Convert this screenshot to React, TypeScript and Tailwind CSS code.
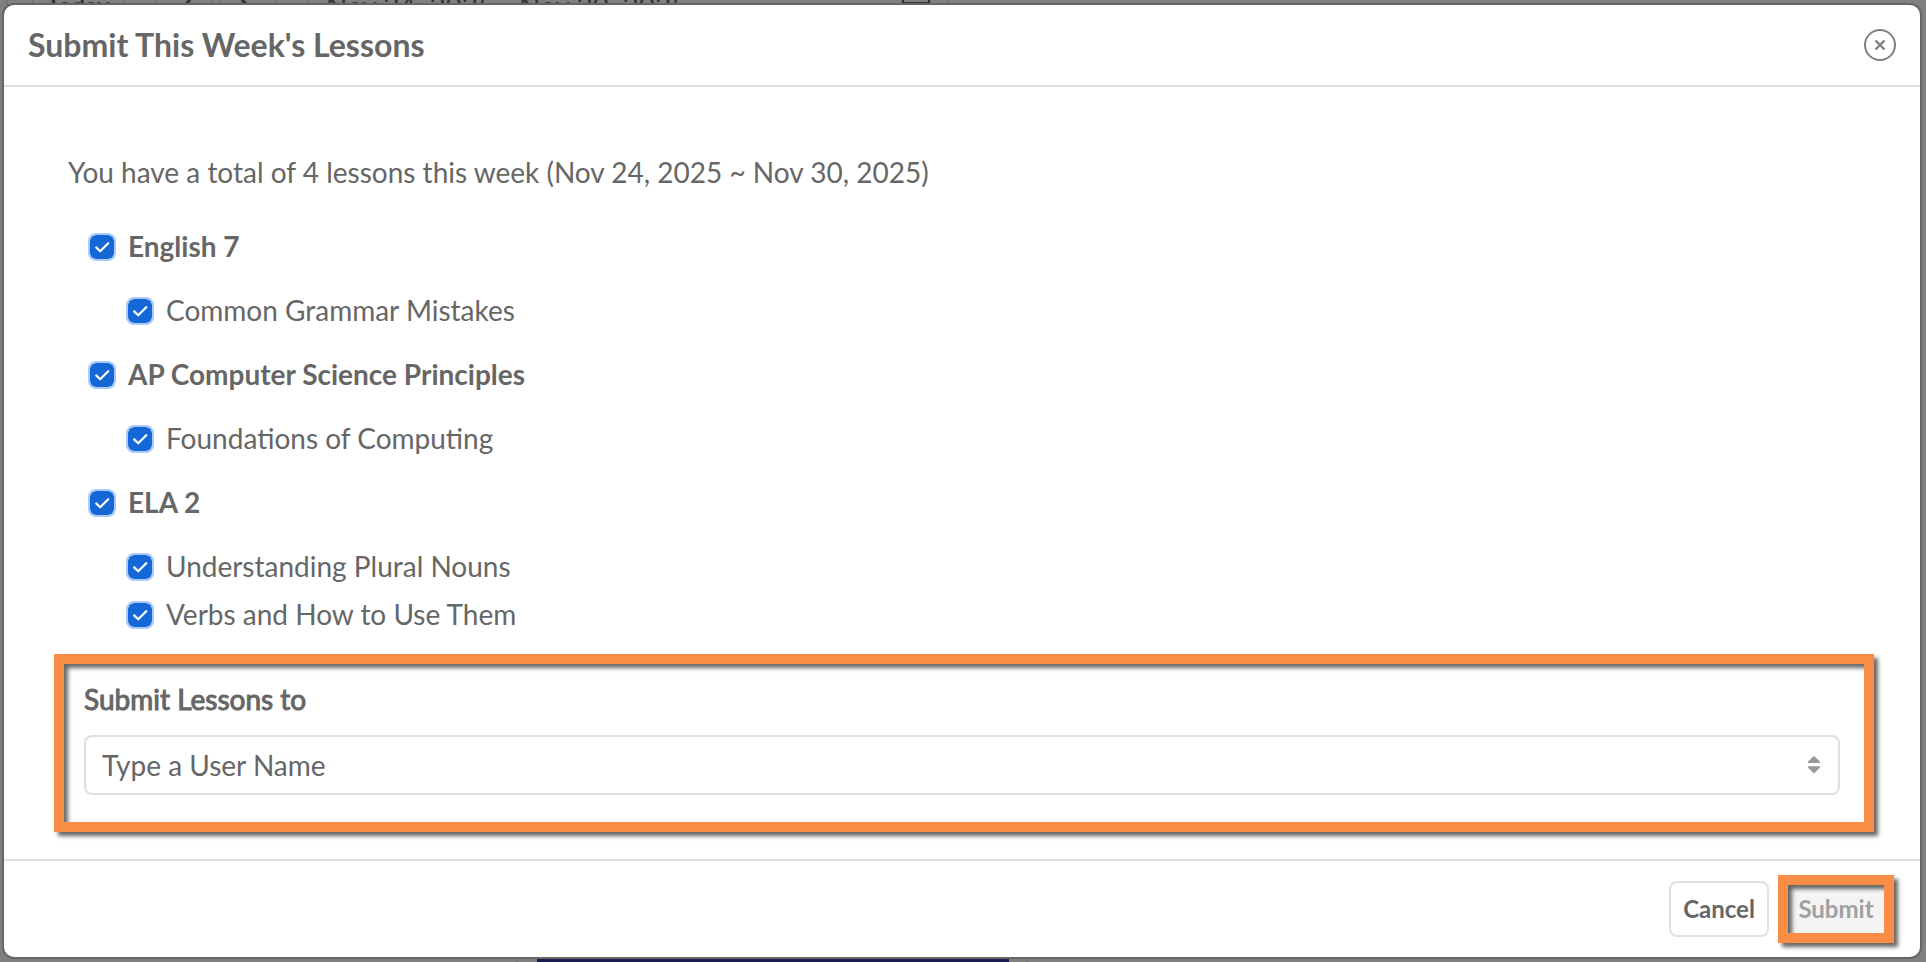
import { useState } from "react";
import { clsx } from "clsx";

type Lesson = { id: string; title: string };
type Course = { id: string; title: string; lessons: Lesson[] };

const courses: Course[] = [
  { id: "eng7", title: "English 7", lessons: [{ id: "grammar", title: "Common Grammar Mistakes" }] },
  { id: "apcsp", title: "AP Computer Science Principles", lessons: [{ id: "foundations", title: "Foundations of Computing" }] },
  {
    id: "ela2",
    title: "ELA 2",
    lessons: [
      { id: "plural", title: "Understanding Plural Nouns" },
      { id: "verbs", title: "Verbs and How to Use Them" },
    ],
  },
];

type CheckRowProps = { id: string; title: string; bold?: boolean; checked: boolean; onChange: () => void };

const CheckRow = ({ id, title, bold, checked, onChange }: CheckRowProps) => (
  <div className="flex h-12 items-center gap-3">
    <span className="grid size-7 shrink-0 place-items-center">
      <input
        id={id}
        type="checkbox"
        checked={checked}
        onChange={onChange}
        className="peer col-start-1 row-start-1 size-7 appearance-none rounded-lg border-2 border-[#a9cbf8] bg-white checked:bg-[#1566d6] checked:bg-clip-padding"
      />
      <svg viewBox="0 0 28 28" className="pointer-events-none invisible col-start-1 row-start-1 size-7 peer-checked:visible" fill="none" stroke="white" strokeWidth="2.2" strokeLinecap="round" strokeLinejoin="round">
        <path d="M8.2 14.4 L12.2 18.3 L20.2 10.2" />
      </svg>
    </span>
    <label htmlFor={id} className={clsx("pb-0.5 text-[28px] leading-9", bold && "font-bold")}>
      {title}
    </label>
  </div>
);

// calendar page that sits dimmed under the dialog
const Backdrop = () => (
  <div className="absolute inset-0 flex flex-col justify-between overflow-hidden bg-[#808080] text-[#333333]" aria-hidden="true">
    <div className="-mt-3 flex h-9 items-center pl-1.5 text-[28px] leading-9">
      <div className="h-9 w-[26px] border-l-2 border-[#757575]" />
      <div className="h-9 w-[92px] border-x-2 border-[#757575] text-center text-2xl leading-9 font-bold">Today</div>
      <div className="ml-8 flex h-9 w-14 items-center justify-center border-x-2 border-[#757575]">
        <svg viewBox="0 0 16 28" className="h-7 w-4" fill="none" stroke="currentColor" strokeWidth="3">
          <path d="M14 8 L2 20 L10 28" />
        </svg>
      </div>
      <div className="ml-2 flex h-9 w-14 items-center justify-center border-x-2 border-[#757575]">
        <svg viewBox="0 0 16 28" className="h-7 w-4" fill="none" stroke="currentColor" strokeWidth="3">
          <path d="M2 8 L14 20 L6 28" />
        </svg>
      </div>
      <div className="ml-8 flex h-9 w-[640px] items-center justify-between border-x-2 border-[#757575] px-4">
        <span>Nov 24, 2025 - Nov 30, 2025</span>
        <svg viewBox="0 0 28 28" className="size-7" fill="none" stroke="currentColor" strokeWidth="2">
          <path d="M1 1 H27 V27 H1 Z M1 11 H27" />
        </svg>
      </div>
    </div>
    <div className="flex h-[5px]">
      <div className="w-[26.9%] border-r-2 border-[#757575]" />
      <div className="w-[1%]" />
      <div className="w-[24.5%] bg-[#1c1c4e]" />
      <div className="w-[1%] border-r-2 border-[#757575]" />
    </div>
  </div>
);

export default function App() {
  const [unchecked, setUnchecked] = useState<string[]>([]);
  const [user, setUser] = useState("");

  const toggle = (id: string) => {
    setUnchecked((prev) => (prev.includes(id) ? prev.filter((x) => x !== id) : [...prev, id]));
  };

  return (
    <div className="relative flex min-h-screen flex-col font-[Lato,sans-serif] text-[#666666]">
      <Backdrop />

      <div role="dialog" aria-labelledby="dialog-title" className="relative mt-[3px] mr-1 mb-[3px] ml-0.5 flex grow flex-col rounded-xl border-2 border-[#666666] bg-white">
        <header className="flex h-[82px] items-center justify-between border-b-2 border-[#e0e0e0] px-6">
          <h1 id="dialog-title" className="text-[32px] leading-10 font-bold">Submit This Week's Lessons</h1>
          <button type="button" aria-label="Close" className="text-[#808080]">
            <svg viewBox="0 0 32 32" className="size-8" fill="none" stroke="currentColor" strokeWidth="2">
              <circle cx="16" cy="16" r="15" />
              <path d="M11.5 11.5 L20.5 20.5 M20.5 11.5 L11.5 20.5" strokeWidth="2.4" />
            </svg>
          </button>
        </header>

        <main className="flex grow flex-col pt-16">
          <p className="px-16 text-[28px] leading-[42px]">You have a total of 4 lessons this week (Nov 24, 2025 ~ Nov 30, 2025)</p>

          <ul className="mt-[30px] flex flex-col gap-4 px-[84px]">
            {courses.map((course) => (
              <li key={course.id} className="flex flex-col gap-4">
                <CheckRow id={course.id} title={course.title} bold checked={!unchecked.includes(course.id)} onChange={() => toggle(course.id)} />
                <ul className="pl-[38px]">
                  {course.lessons.map((lesson) => (
                    <li key={lesson.id}>
                      <CheckRow id={lesson.id} title={lesson.title} checked={!unchecked.includes(lesson.id)} onChange={() => toggle(lesson.id)} />
                    </li>
                  ))}
                </ul>
              </li>
            ))}
          </ul>

          <section className="mt-[15px] mr-[46px] ml-[50px] flex h-[178px] flex-col gap-4 border-10 border-[#f88d43] pt-[15px] pr-6 pl-5 shadow-[4px_4px_4px_#00000099,inset_4px_4px_4px_#00000099]">
            <label htmlFor="user" className="text-[28px] leading-10 [-webkit-text-stroke:1px_#666666]">Submit Lessons to</label>
            <div className="grid">
              <select
                id="user"
                value={user}
                onChange={(e) => setUser(e.target.value)}
                className="col-start-1 row-start-1 h-15 w-full appearance-none rounded-lg border-2 border-[#e0e0e0] bg-white px-4 text-[28px]"
              >
                <option value="">Type a User Name</option>
              </select>
              <svg viewBox="0 0 12 18" className="pointer-events-none col-start-1 row-start-1 mr-5 h-[18px] w-3 self-center justify-self-end" fill="#999999">
                <path d="M5.2 .5 Q6 -.2 6.8 .5 L11.6 5.2 Q12 5.6 12 6.2 V7 H0 V6.2 Q0 5.6 .4 5.2 Z" />
                <path d="M5.2 16.7 Q6 17.4 6.8 16.7 L11.6 12 Q12 11.6 12 11 V10.2 H0 V11 Q0 11.6 .4 12 Z" />
              </svg>
            </div>
          </section>
        </main>

        <footer className="flex h-[98px] items-center justify-end gap-[9px] border-t-2 border-[#e0e0e0] pr-[26px]">
          <button type="button" className="h-14 w-[100px] rounded-lg border-2 border-[#e0e0e0] bg-white text-2xl font-bold">Cancel</button>
          <button type="button" className="h-17 w-[116px] border-10 border-[#f88d43] bg-[#f4f4f4] text-2xl font-bold text-[#a0a0a0] shadow-[4px_4px_4px_#00000099,inset_4px_4px_4px_#00000099]">
            Submit
          </button>
        </footer>
      </div>
    </div>
  );
}
